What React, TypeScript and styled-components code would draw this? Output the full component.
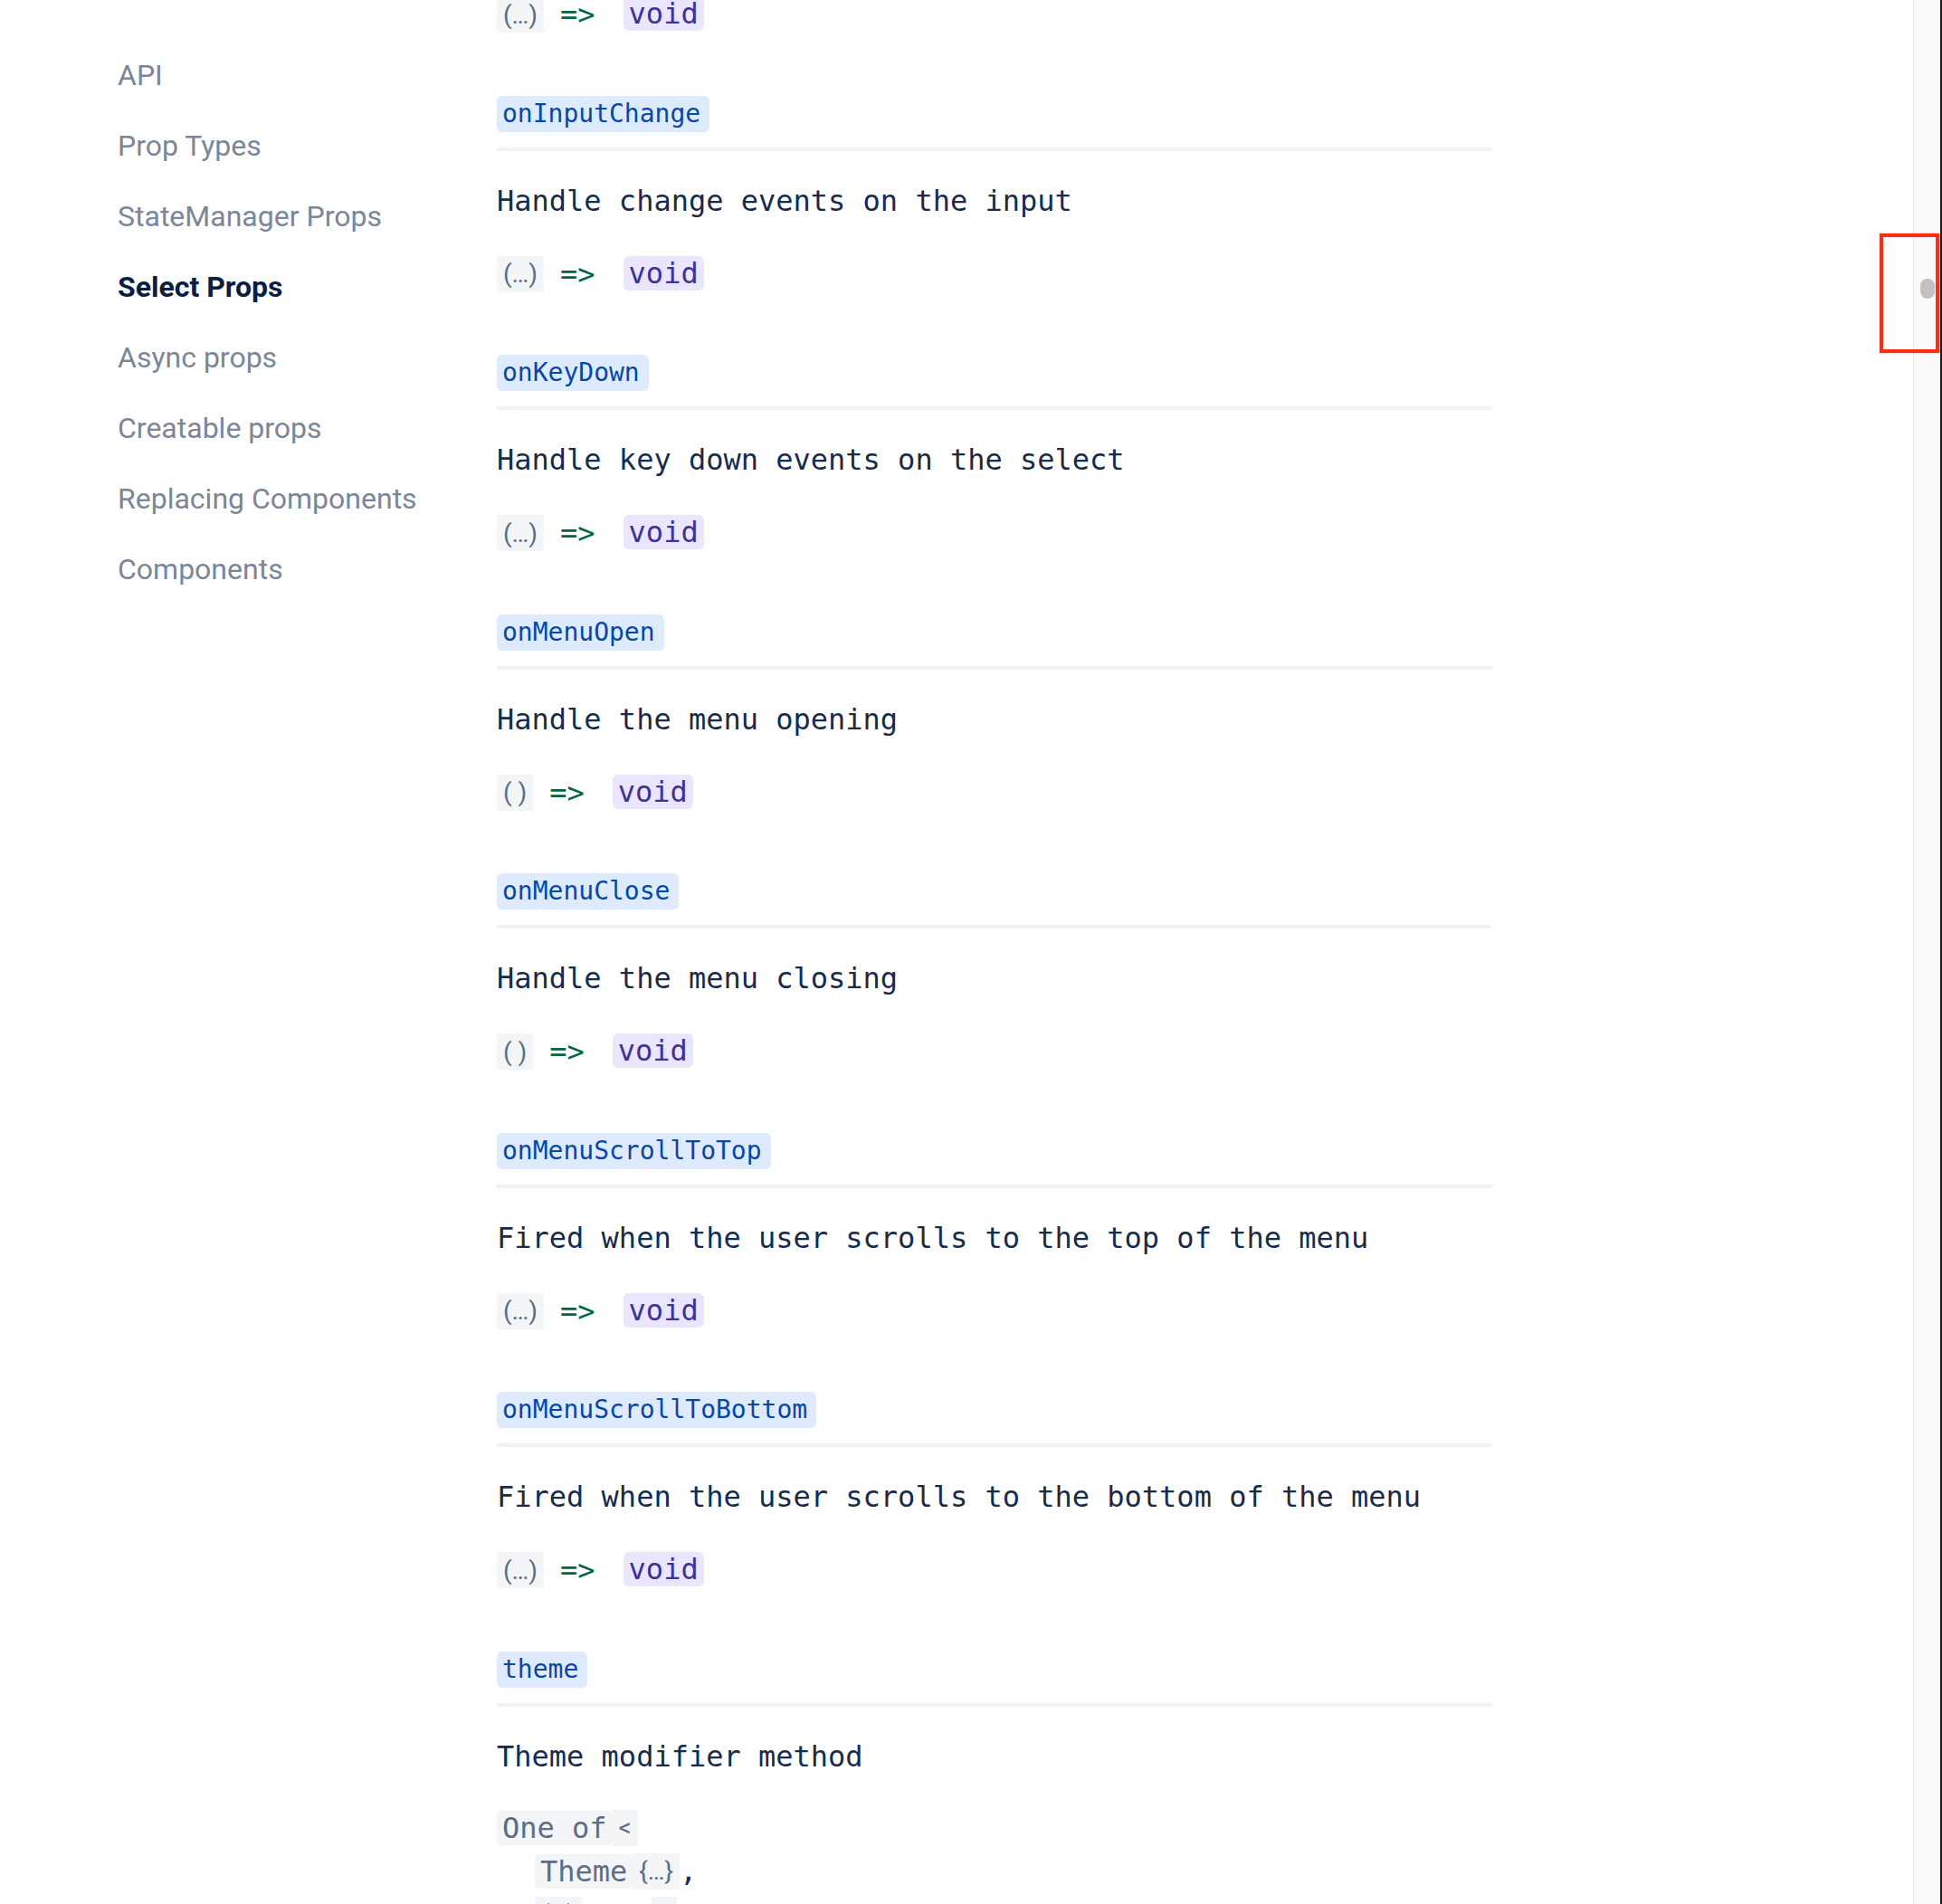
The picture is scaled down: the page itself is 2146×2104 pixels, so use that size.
import React from "react";
import styled, { createGlobalStyle } from "styled-components";

const GlobalStyle = createGlobalStyle`
  html, body {
    margin: 0;
    padding: 0;
    background: #fff;
  }
  body {
    overflow: hidden;
  }
`;

const Page = styled.div`
  position: relative;
  display: flex;
  width: 2146px;
  height: 2104px;
  overflow: hidden;
  background: #fff;
`;

const Sidebar = styled.nav`
  flex: 0 0 549px;
  box-sizing: border-box;
  padding: 44px 0 0 130px;
  font-family: Roboto, "Noto Sans", sans-serif;
  font-size: 32px;
`;

const NavItem = styled.div<{ $active?: boolean }>`
  height: 78px;
  line-height: 78px;
  white-space: nowrap;
  color: ${(p) => (p.$active ? "#091e42" : "#7a869a")};
  font-weight: ${(p) => (p.$active ? 700 : 400)};
`;

const Main = styled.main`
  flex: 0 0 1100px;
  display: flex;
  flex-direction: column;
  gap: 69.5px;
  font-family: "DejaVu Sans Mono", "Liberation Mono", monospace;
  color: #172b4d;
`;

const Section = styled.section`
  display: flex;
  flex-direction: column;
`;

const Heading = styled.div`
  padding-bottom: 17px;
  border-bottom: 4px solid #f1f2f5;
`;

const PropName = styled.code`
  display: inline-block;
  height: 40px;
  line-height: 40px;
  padding: 0 10px 0 6px;
  border-radius: 6px;
  font-family: inherit;
  font-size: 28px;
  color: #0747a6;
  background: #deebff;
`;

const Description = styled.p`
  margin: 31px 0 0;
  font-size: 32px;
  line-height: 48px;
  white-space: pre;
`;

const TypeRow = styled.div<{ $top?: number }>`
  display: flex;
  align-items: flex-start;
  height: 40px;
  margin-top: ${(p) => (p.$top !== undefined ? p.$top : 37)}px;
`;

const Meta = styled.span`
  display: inline-flex;
  align-items: center;
  height: 40px;
  padding: 0 7px;
  white-space: pre;
  font-family: Roboto, "Noto Sans", sans-serif;
  font-size: 28px;
  color: #5e6c84;
  background: #f4f5f7;
`;

const Arrow = styled.span<{ $tight?: boolean }>`
  margin: 0 ${(p) => (p.$tight ? 20 : 31)}px 0 18px;
  font-size: 32px;
  line-height: 40px;
  color: #006644;
`;

const TypeName = styled.span<{ $tone?: "void" | "plain" }>`
  display: inline-block;
  height: 38px;
  line-height: 38px;
  padding: 0 6px;
  border-radius: 6px;
  font-size: 32px;
  white-space: pre;
  color: ${(p) => (p.$tone === "void" ? "#403294" : "#5e6c84")};
  background: ${(p) => (p.$tone === "void" ? "#eae6ff" : "#f4f5f7")};
`;

const Union = styled.div`
  display: flex;
  flex-direction: column;
  margin-top: 31px;
`;

const UnionLine = styled.div<{ $indent?: boolean }>`
  display: flex;
  align-items: center;
  height: 48px;
  padding-left: ${(p) => (p.$indent ? 42 : 0)}px;
`;

const Punct = styled.span`
  font-size: 32px;
  color: #172b4d;
`;

const Spacer = styled.div`
  flex: 1;
`;

const ScrollTrack = styled.div`
  flex: 0 0 29px;
  display: flex;
  justify-content: center;
  border-left: 1px solid #e4e4e4;
  background: #fafafa;
`;

const Thumb = styled.div`
  width: 16px;
  height: 22px;
  margin-top: 308px;
  border-radius: 8px;
  background: #c1c1c1;
`;

const WindowEdge = styled.div`
  flex: 0 0 2px;
  background: #1b1b1b;
`;

const Highlight = styled.div`
  position: absolute;
  left: 2077px;
  top: 258px;
  width: 66px;
  height: 132px;
  box-sizing: border-box;
  border: 4px solid #ff2d12;
  box-shadow: 0 0 2px rgba(255, 45, 18, 0.4);
`;

const nav = [
  "API",
  "Prop Types",
  "StateManager Props",
  "Select Props",
  "Async props",
  "Creatable props",
  "Replacing Components",
  "Components",
];

type Prop = {
  name: string;
  description: string;
  args: string;
};

const props: Prop[] = [
  { name: "onInputChange", description: "Handle change events on the input", args: "(…)" },
  { name: "onKeyDown", description: "Handle key down events on the select", args: "(…)" },
  { name: "onMenuOpen", description: "Handle the menu opening", args: "( )" },
  { name: "onMenuClose", description: "Handle the menu closing", args: "( )" },
  {
    name: "onMenuScrollToTop",
    description: "Fired when the user scrolls to the top of the menu",
    args: "(…)",
  },
  {
    name: "onMenuScrollToBottom",
    description: "Fired when the user scrolls to the bottom of the menu",
    args: "(…)",
  },
];

const FunctionType = ({ args, top }: { args: string; top?: number }) => (
  <TypeRow $top={top}>
    <Meta>{args}</Meta>
    <Arrow>=&gt;</Arrow>
    <TypeName $tone="void">void</TypeName>
  </TypeRow>
);

const App = () => {
  return (
    <>
      <GlobalStyle />
      <Page>
        <Sidebar>
          {nav.map((item) => (
            <NavItem key={item} $active={item === "Select Props"}>
              {item}
            </NavItem>
          ))}
        </Sidebar>

        <Main>
          <FunctionType args="(…)" top={-4} />

          {props.map((prop) => (
            <Section key={prop.name}>
              <Heading>
                <PropName>{prop.name}</PropName>
              </Heading>
              <Description>{prop.description}</Description>
              <FunctionType args={prop.args} />
            </Section>
          ))}

          <Section>
            <Heading>
              <PropName>theme</PropName>
            </Heading>
            <Description>Theme modifier method</Description>
            <Union>
              <UnionLine>
                <TypeName>One of</TypeName>
                <Meta>&lt;</Meta>
              </UnionLine>
              <UnionLine $indent>
                <TypeName>Theme</TypeName>
                <Meta>{"{…}"}</Meta>
                <Punct>,</Punct>
              </UnionLine>
              <UnionLine $indent>
                <Meta>(…)</Meta>
                <Arrow $tight>=&gt;</Arrow>
                <Meta>&lt;</Meta>
              </UnionLine>
            </Union>
          </Section>
        </Main>

        <Spacer />
        <ScrollTrack>
          <Thumb />
        </ScrollTrack>
        <WindowEdge />
        <Highlight />
      </Page>
    </>
  );
};

export default App;
